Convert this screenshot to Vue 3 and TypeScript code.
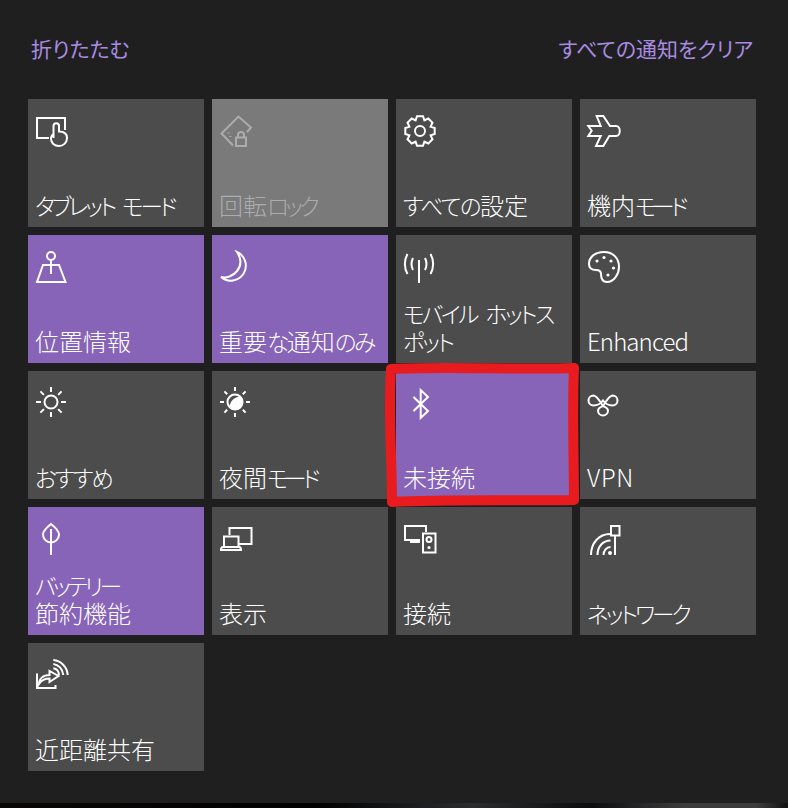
<script setup lang="ts">
interface Tile {
	label: string
	state?: 'on' | 'off'
	tracking?: number
	lines: string[]
	solid?: string[]
}

const circle = (cx: number, cy: number, r: number) =>
	`M${cx - r} ${cy}a${r} ${r} 0 1 0 ${r * 2} 0a${r} ${r} 0 1 0 ${-r * 2} 0z`

// 歯車は角度から作る
const gear = () => {
	const pts: string[] = []
	for (let i = 0; i < 8; i++) {
		const a = (i * Math.PI) / 4 - Math.PI / 2
		const at = (r: number, d: number) =>
			`${(16 + r * Math.cos(a + d)).toFixed(1)} ${(16 + r * Math.sin(a + d)).toFixed(1)}`
		pts.push(at(11.5, -0.39), at(15, -0.2), at(15, 0.2), at(11.5, 0.39))
	}
	return 'M' + pts.join('L') + 'z'
}

const rays = (cx: number, cy: number, from: number, to: number) => {
	let d = ''
	for (let i = 0; i < 8; i++) {
		const a = (i * Math.PI) / 4
		d += `M${(cx + from * Math.cos(a)).toFixed(1)} ${(cy + from * Math.sin(a)).toFixed(1)}`
		d += `L${(cx + to * Math.cos(a)).toFixed(1)} ${(cy + to * Math.sin(a)).toFixed(1)}`
	}
	return d
}

// 漢字はそのまま、かなと英字だけ詰める
const runs = (label: string) =>
	(label.match(/[一-龠]+|[ぁ-ヿ ]+|[^一-龠ぁ-ヿ ]+/g) ?? []).map((text) => ({
		text,
		kanji: /[一-龠]/.test(text),
		kana: /[ぁ-ヿ]/.test(text),
	}))

const tiles: Tile[] = [
	{
		label: 'タブレット モード',
		tracking: -3,
		lines: [
			'M13 23H1V3h28v12',
			'M17.500 23V11c0-3.600 5.500-3.600 5.500 0v5.500c5 0 8 2 8 6.500c0 5-4 8-8 8c-4.500 0-8-3-8-7.500c0-2 .8-3.500 2.500-4.500',
		],
	},
	{
		label: '回転ロック',
		state: 'off',
		tracking: -3.6,
		lines: [
			'M13 30.500L1.500 18.500L18.500 1.500L31 12.500L27 17',
			'M16 22.500h10v8.500H16zM18 22.500v-2.500c0-4 6-4 6 0v2.500',
			'M8.500 17.500v1M10.500 21v1',
		],
	},
	{ label: 'すべての設定', tracking: -1.55, lines: [gear(), circle(16, 16, 5)] },
	{
		label: '機内モード',
		tracking: -4,
		lines: ['M8.700 1H15.300L22 11h6c5 0 5 10 0 10h-6.700L15.300 31H8L12.700 21H.3l3.400-5.300L.3 11H12.700z'],
	},
	{
		label: '位置情報',
		state: 'on',
		lines: [circle(15, 5, 4), 'M15 9v14', 'M7 14h16l6.500 17H1z'],
	},
	{
		label: '重要な通知のみ',
		state: 'on',
		tracking: -2.35,
		lines: ['M17 1a15 15 0 1 1-16 25C12 29 27 16 17 1z'],
	},
	{
		label: 'モバイル ホットス\nポット',
		tracking: -2.4,
		lines: [
			'M15 9v23',
			'M3.500 3c-3.500 6-3.500 14 0 20M26.500 3c3.500 6 3.500 14 0 20',
			'M9 7c-2 4-2 8 0 12M21 7c2 4 2 8 0 12',
		],
	},
	{
		label: 'Enhanced',
		tracking: -0.9,
		lines: ['M16 1C7 1 1 6 1 13c0 4 3 6 7 6 3 0 5 1 5 4 0 5 2 8 6 8 7 0 12-8 12-15C31 7 25 1 16 1z'],
		solid: [
			circle(9, 10, 1.6),
			circle(16, 6.5, 1.6),
			circle(23, 10, 1.6),
			circle(25.5, 17, 1.6),
			circle(20, 24, 1.6),
		],
	},
	{
		label: 'おすすめ',
		tracking: -2,
		lines: [circle(15, 15, 6.5), rays(15, 15, 10, 15)],
	},
	{
		label: '夜間モード',
		tracking: -4,
		lines: [circle(15, 15, 7.5), rays(15, 15, 11, 15)],
		solid: ['M20.500 9.500A7.800 7.800 0 1 1 9.500 20.500C10 14 14 10 20.500 9.500z'],
	},
	{
		label: '未接続',
		state: 'on',
		lines: ['M9.500 10L24 24L16.700 31V3L24 10L9.500 24'],
	},
	{
		label: 'VPN',
		tracking: 0.7,
		lines: [
			'M15 19C12 15 9.500 9 5.500 8.500a5 5 0 0 0 0 10c3.500 0 7-1.500 9.500-5c2.500 3.500 6 5 9.500 5a5 5 0 0 0 0-10c-4 .5-6.500 6.500-9.500 10.500',
			'M15 19c-2 1-5 2-5 4.500a5 5 0 0 0 10 0c0-2.500-3-3.500-5-4.500',
		],
	},
	{
		label: 'バッテリー\n節約機能',
		state: 'on',
		tracking: -3.25,
		lines: ['M15 1C10 5 7 8 7 11.500a8 8 0 0 0 16 0C23 8 20 5 15 1z', 'M15 6v26'],
	},
	{
		label: '表示',
		lines: [
			'M9.500 12V5h22v16H19',
			'M4 24V13.500h14.500V24',
			'M1 27c0-2 1-3 2-3h16c1 0 2 1 2 3z',
		],
	},
	{
		label: '接続',
		lines: [
			'M16 17H1V3h21v6',
			'M6 19h10M10.500 17v2',
			'M19 10.500h12.500v19H19z',
			circle(25, 16.5, 2.5),
		],
		solid: [circle(25, 24.5, 1.6)],
	},
	{
		label: 'ネットワーク',
		tracking: -2.85,
		lines: [
			'M23 3h8.500v9.500H23z',
			'M27 12.500V32',
			'M3 32C3 20 11 11 22 11',
			'M9.500 32c0-8 5-14.500 13-14.500',
			'M15.500 32c0-4.500 3-8 7-8',
		],
		solid: [circle(22, 30, 2)],
	},
	{
		label: '近距離共有',
		lines: [
			'M1 14.500V29h18.500v-3',
			'M3 25c0-5 4-9 10.500-9V12l9 5-9 6v-3.500c-4 0-7.500 1-10.500 5.500z',
			'M17.300 9.300c3 .5 5.500 3 5.700 6.700',
			'M17.300 5c5 .5 9.500 5 10 11',
			'M17.300 1c7.500.5 14 7 14.400 15',
		],
	},
]
</script>

<template>
	<div class="page">
		<div class="header">
			<span>折りたたむ</span>
			<span>すべての通知をクリア</span>
		</div>
		<div class="grid">
			<div v-for="tile in tiles" :key="tile.label" class="tile" :class="tile.state">
				<svg class="icon" viewBox="0 0 36 36" width="36" height="36">
					<path v-for="d in tile.lines" :key="d" :d="d" class="line" />
					<path v-for="d in tile.solid" :key="d" :d="d" class="solid" />
				</svg>
				<div class="label"><span
					v-for="(run, i) in runs(tile.label)"
					:key="i"
					:class="{ kana: run.kana }"
					:style="run.kanji ? undefined : { letterSpacing: (tile.tracking ?? 0) + 'px' }"
				>{{ run.text }}</span></div>
			</div>
		</div>
		<div class="strip"></div>
		<!-- 赤い手書きの枠 -->
		<svg class="mark" viewBox="0 0 788 808" width="788" height="808">
			<path d="M391 369C440 366 520 370 574 368C572 410 574 460 574 500C520 501 450 499 392 502C392 460 388 410 391 369z" />
		</svg>
	</div>
</template>

<style scoped>
.page {
	position: relative;
	display: flex;
	flex-direction: column;
	width: 788px;
	height: 808px;
	overflow: hidden;
	background-color: #1f1f1f;
	font-family: "Noto Sans CJK JP", "Noto Sans", sans-serif;
	font-weight: 300;
	color: #fff;
}

.header {
	display: flex;
	justify-content: space-between;
	align-items: center;
	height: 95px;
	padding: 0 35px 0 31px;
	margin-bottom: 4px;
	font-size: 21px;
	font-weight: 400;
	color: #a98be0;
	font-feature-settings: "palt";
}

.grid {
	display: grid;
	grid-template-columns: repeat(4, 176px);
	grid-auto-rows: 128px;
	gap: 8px;
	padding-left: 28px;
}

.tile {
	display: flex;
	flex-direction: column;
	justify-content: space-between;
	padding: 16px 0 8px 8px;
	background-color: #4c4c4c;
}

.tile.on {
	background-color: #8764b8;
}

.tile.off {
	background-color: #7a7a7a;
	color: #acacac;
}

.icon {
	display: block;
	overflow: visible;
}

.line {
	fill: none;
	stroke: currentColor;
	stroke-width: 2;
}

.solid {
	fill: currentColor;
}

.label {
	margin-left: -1px;
	font-size: 24px;
	line-height: 28px;
	white-space: pre-line;
	word-spacing: 6px;
	font-feature-settings: "palt";
}

.kana {
	font-size: 22.5px;
}

.strip {
	margin-top: auto;
	height: 5px;
	background: linear-gradient(90deg, #0a0606 0, #000 40%, #2a2c30 60%, #0b0c10 75%, #3c3c3c 87%, #3c3c3c 96%, #111 100%);
}

.mark {
	position: absolute;
	top: 0;
	left: 0;
	pointer-events: none;
}

.mark path {
	fill: none;
	stroke: #e81c1f;
	stroke-width: 10;
	stroke-linejoin: round;
}
</style>
